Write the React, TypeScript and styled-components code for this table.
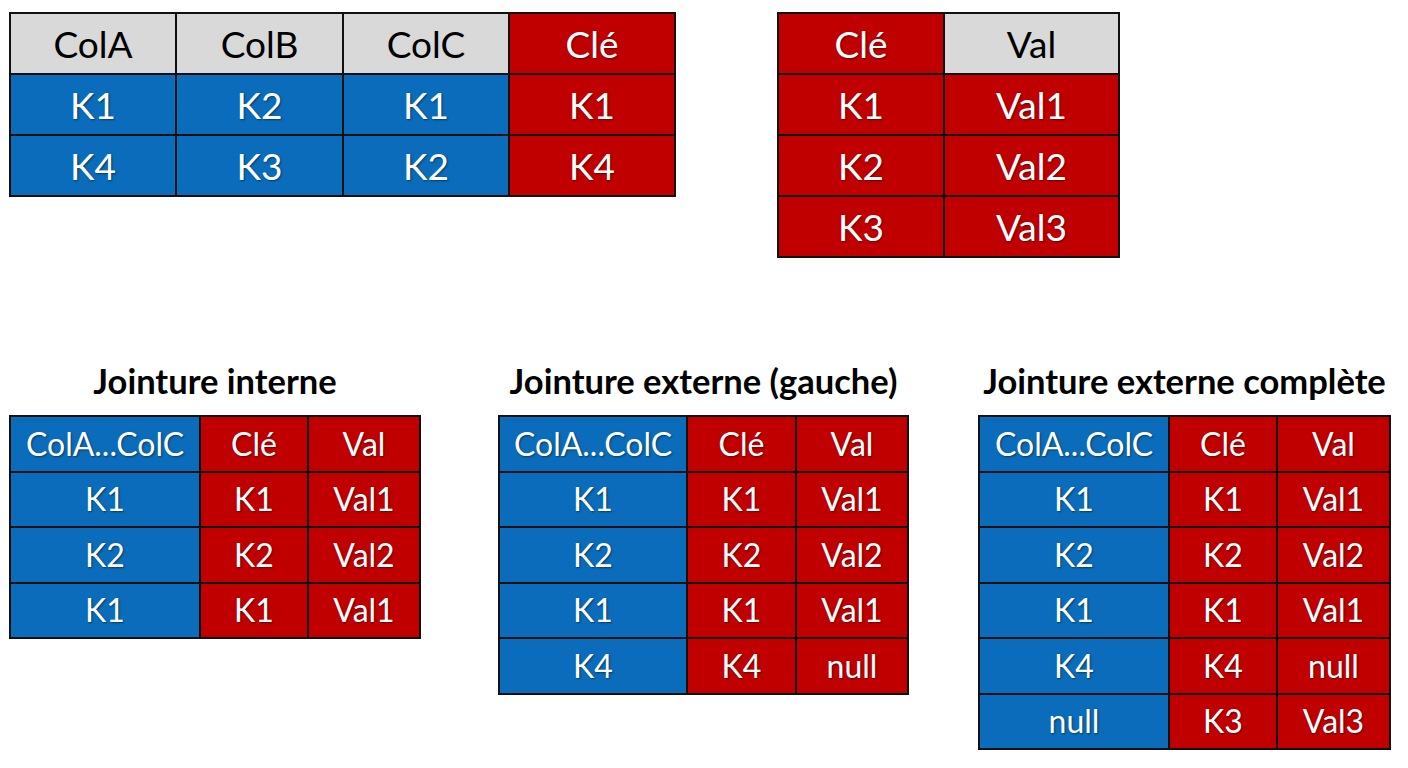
import React from "react";
import styled, { createGlobalStyle } from "styled-components";

type Tone = "grey" | "blue" | "red";

interface Cell {
  text: string;
  tone: Tone;
}

const GlobalStyle = createGlobalStyle`
  html, body {
    margin: 0;
    padding: 0;
    background: #ffffff;
  }
  body {
    font-family: Lato, "Open Sans", "Noto Sans", sans-serif;
  }
`;

const Page = styled.div`
  width: 1408px;
  height: 768px;
  box-sizing: border-box;
  padding: 12px 0 0 9px;
  display: flex;
  flex-direction: column;
  background: #ffffff;
  overflow: hidden;
`;

const TopRow = styled.div`
  display: flex;
  align-items: flex-start;
  gap: 101px;
`;

const BottomRow = styled.div`
  display: flex;
  align-items: flex-start;
  margin-top: 99px;
`;

const Block = styled.div<{ $offset: number }>`
  display: flex;
  flex-direction: column;
  align-items: center;
  margin-left: ${(p) => p.$offset}px;
`;

const Title = styled.h2`
  margin: 0 0 10px;
  font-size: 34.5px;
  line-height: 48px;
  font-weight: 700;
  color: #000;
  white-space: nowrap;
`;

const Grid = styled.table`
  border-collapse: collapse;
  table-layout: fixed;
  border: 2px solid #111;
`;

const Row = styled.tr<{ $h: number }>`
  height: ${(p) => p.$h}px;
`;

const tones: Record<Tone, { bg: string; fg: string; shadow: string }> = {
  grey: { bg: "#d9d9d9", fg: "#000000", shadow: "none" },
  blue: { bg: "#0a6cba", fg: "#ffffff", shadow: "1px 1px 2px rgba(0,0,0,0.45)" },
  red: { bg: "#c00000", fg: "#ffffff", shadow: "1px 1px 2px rgba(0,0,0,0.45)" },
};

const Td = styled.td<{ $tone: Tone; $size: number }>`
  border: 2px solid #111;
  padding: 0;
  text-align: center;
  vertical-align: middle;
  white-space: nowrap;
  font-size: ${(p) => p.$size}px;
  line-height: 1;
  background: ${(p) => tones[p.$tone].bg};
  color: ${(p) => tones[p.$tone].fg};
  text-shadow: ${(p) => tones[p.$tone].shadow};
`;

const B = (text: string): Cell => ({ text, tone: "blue" });
const R = (text: string): Cell => ({ text, tone: "red" });
const G = (text: string): Cell => ({ text, tone: "grey" });

interface TableProps {
  widths: number[];
  rows: Cell[][];
  rowHeight: number;
  size: number;
}

const DataTable: React.FC<TableProps> = ({ widths, rows, rowHeight, size }) => (
  <Grid style={{ width: widths.reduce((a, b) => a + b, 0) }}>
    <colgroup>
      {widths.map((w, i) => (
        <col key={i} style={{ width: w }} />
      ))}
    </colgroup>
    <tbody>
      {rows.map((row, i) => (
        <Row key={i} $h={rowHeight}>
          {row.map((c, j) => (
            <Td key={j} $tone={c.tone} $size={size}>
              {c.text}
            </Td>
          ))}
        </Row>
      ))}
    </tbody>
  </Grid>
);

const left: Cell[][] = [
  [G("ColA"), G("ColB"), G("ColC"), R("Clé")],
  [B("K1"), B("K2"), B("K1"), R("K1")],
  [B("K4"), B("K3"), B("K2"), R("K4")],
];

const right: Cell[][] = [
  [R("Clé"), G("Val")],
  [R("K1"), R("Val1")],
  [R("K2"), R("Val2")],
  [R("K3"), R("Val3")],
];

const head = [B("ColA...ColC"), R("Clé"), R("Val")];

const inner: Cell[][] = [
  head,
  [B("K1"), R("K1"), R("Val1")],
  [B("K2"), R("K2"), R("Val2")],
  [B("K1"), R("K1"), R("Val1")],
];

const leftJoin: Cell[][] = [...inner, [B("K4"), R("K4"), R("null")]];

const fullJoin: Cell[][] = [...leftJoin, [B("null"), R("K3"), R("Val3")]];

const joins = [
  { title: "Jointure interne", rows: inner, widths: [190, 108, 112], offset: 0 },
  { title: "Jointure externe (gauche)", rows: leftJoin, widths: [188, 109, 112], offset: 77 },
  { title: "Jointure externe complète", rows: fullJoin, widths: [190, 108, 113], offset: 69 },
];

const App: React.FC = () => (
  <>
    <GlobalStyle />
    <Page>
      <TopRow>
        <DataTable widths={[166, 167, 166, 166]} rows={left} rowHeight={61} size={37} />
        <DataTable widths={[166, 175]} rows={right} rowHeight={61} size={37} />
      </TopRow>
      <BottomRow>
        {joins.map((j) => (
          <Block key={j.title} $offset={j.offset}>
            <Title>{j.title}</Title>
            <DataTable widths={j.widths} rows={j.rows} rowHeight={55.5} size={32} />
          </Block>
        ))}
      </BottomRow>
    </Page>
  </>
);

export default App;
